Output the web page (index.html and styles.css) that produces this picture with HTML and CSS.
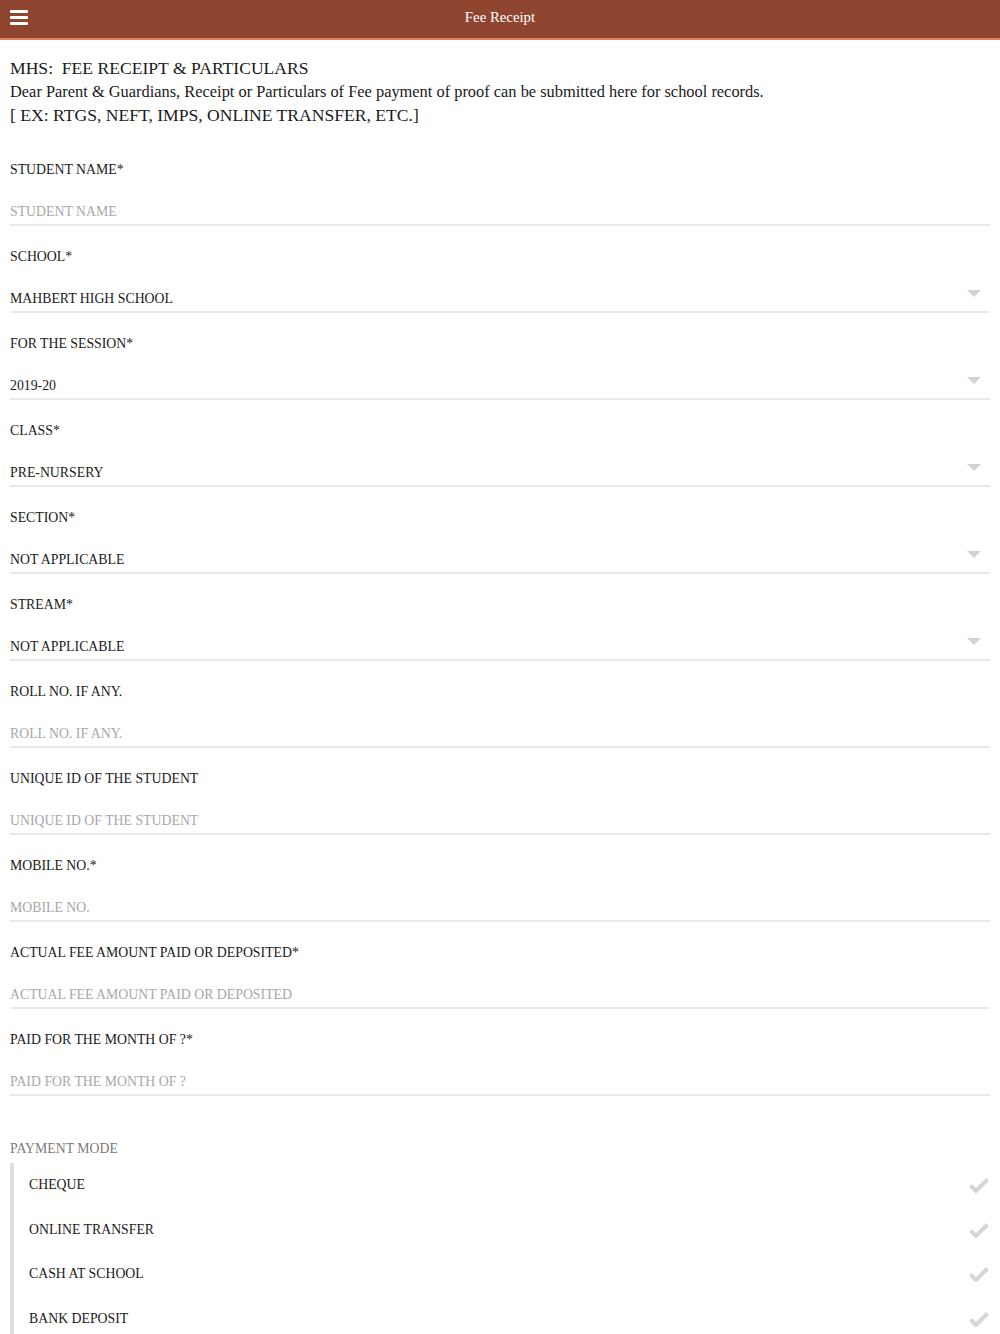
FILE: index.html
```html
<!DOCTYPE html>
<html>
<head>
<meta charset="utf-8">
<link rel="stylesheet" href="styles.css">
</head>
<body>
<header class="topbar">
  <span class="menu"><i></i><i></i><i></i></span>
  <span class="title">Fee Receipt</span>
</header>
<main class="page">
  <div class="intro">
    <div class="intro-h">MHS:&nbsp; FEE RECEIPT &amp; PARTICULARS</div>
    <div class="intro-p">Dear Parent &amp; Guardians, Receipt or Particulars of Fee payment of proof can be submitted here for school records.</div>
    <div class="intro-h">[ EX: RTGS, NEFT, IMPS, ONLINE TRANSFER, ETC.]</div>
  </div>

  <div class="field"><div class="label">STUDENT NAME*</div><div class="input ph">STUDENT NAME</div></div>
  <div class="field"><div class="label">SCHOOL*</div><div class="input sel">MAHBERT HIGH SCHOOL<span class="caret"></span></div></div>
  <div class="field"><div class="label">FOR THE SESSION*</div><div class="input sel">2019-20<span class="caret"></span></div></div>
  <div class="field"><div class="label">CLASS*</div><div class="input sel">PRE-NURSERY<span class="caret"></span></div></div>
  <div class="field"><div class="label">SECTION*</div><div class="input sel">NOT APPLICABLE<span class="caret"></span></div></div>
  <div class="field"><div class="label">STREAM*</div><div class="input sel">NOT APPLICABLE<span class="caret"></span></div></div>
  <div class="field"><div class="label">ROLL NO. IF ANY.</div><div class="input ph">ROLL NO. IF ANY.</div></div>
  <div class="field"><div class="label">UNIQUE ID OF THE STUDENT</div><div class="input ph">UNIQUE ID OF THE STUDENT</div></div>
  <div class="field"><div class="label">MOBILE NO.*</div><div class="input ph">MOBILE NO.</div></div>
  <div class="field"><div class="label">ACTUAL FEE AMOUNT PAID OR DEPOSITED*</div><div class="input ph">ACTUAL FEE AMOUNT PAID OR DEPOSITED</div></div>
  <div class="field"><div class="label">PAID FOR THE MONTH OF ?*</div><div class="input ph">PAID FOR THE MONTH OF ?</div></div>

  <div class="pm-label">PAYMENT MODE</div>
  <div class="options">
    <div class="opt"><span>CHEQUE</span><svg class="check" viewBox="0 0 20 16"><path d="M1.5 8.5 L7 14 L18.5 2.5" fill="none" stroke="#d6d6d6" stroke-width="4"/></svg></div>
    <div class="opt"><span>ONLINE TRANSFER</span><svg class="check" viewBox="0 0 20 16"><path d="M1.5 8.5 L7 14 L18.5 2.5" fill="none" stroke="#d6d6d6" stroke-width="4"/></svg></div>
    <div class="opt"><span>CASH AT SCHOOL</span><svg class="check" viewBox="0 0 20 16"><path d="M1.5 8.5 L7 14 L18.5 2.5" fill="none" stroke="#d6d6d6" stroke-width="4"/></svg></div>
    <div class="opt"><span>BANK DEPOSIT</span><svg class="check" viewBox="0 0 20 16"><path d="M1.5 8.5 L7 14 L18.5 2.5" fill="none" stroke="#d6d6d6" stroke-width="4"/></svg></div>
  </div>
</main>
</body>
</html>
```

FILE: styles.css
```css
* { box-sizing: border-box; }
html, body { margin: 0; padding: 0; background: #fff; }
body {
  font-family: "Liberation Serif", "Times New Roman", serif;
  color: #1a1a1a;
  overflow: hidden;
}
.topbar {
  height: 40px;
  background: #8f4430;
  border-bottom: 2px solid #e07d66;
  display: flex;
  align-items: center;
  justify-content: center;
  position: relative;
}
.menu {
  position: absolute;
  left: 10px;
  top: 10px;
  width: 18px;
  height: 15px;
  display: flex;
  flex-direction: column;
  justify-content: space-between;
}
.menu i {
  display: block;
  height: 3px;
  background: #fff;
  border-radius: 1px;
}
.title {
  color: #fff;
  font-size: 14.8px;
  margin-top: -4px;
}
.page { padding: 0 10px; }
.intro { padding-top: 17px; margin-bottom: 33px; }
.intro-h { font-size: 17.6px; line-height: 23px; }
.intro-p { font-size: 16.4px; line-height: 24px; }
.field { height: 87px; }
.label {
  font-size: 13.8px;
  line-height: 20px;
  height: 42px;
}
.input {
  font-size: 13.8px;
  line-height: 20px;
  height: 24px;
  border-bottom: 2px solid #e8e8e8;
  position: relative;
}
.input.ph { color: #a8a8a8; }
.caret {
  position: absolute;
  right: 9px;
  top: 1px;
  width: 0;
  height: 0;
  border-left: 7px solid transparent;
  border-right: 7px solid transparent;
  border-top: 7px solid #d2d2d2;
}
.pm-label {
  margin-top: 22px;
  font-size: 13.8px;
  color: #7a7a7a;
  line-height: 20px;
}
.options {
  border-left: 4px solid #dedede;
  margin-top: 4px;
  padding-top: 12px;
}
.opt {
  height: 44.5px;
  display: flex;
  justify-content: space-between;
  align-items: flex-start;
  padding-left: 15px;
  font-size: 13.8px;
  line-height: 20px;
}
.check {
  width: 20px;
  height: 16px;
  margin-top: 2px;
  margin-right: 1px;
}
```
